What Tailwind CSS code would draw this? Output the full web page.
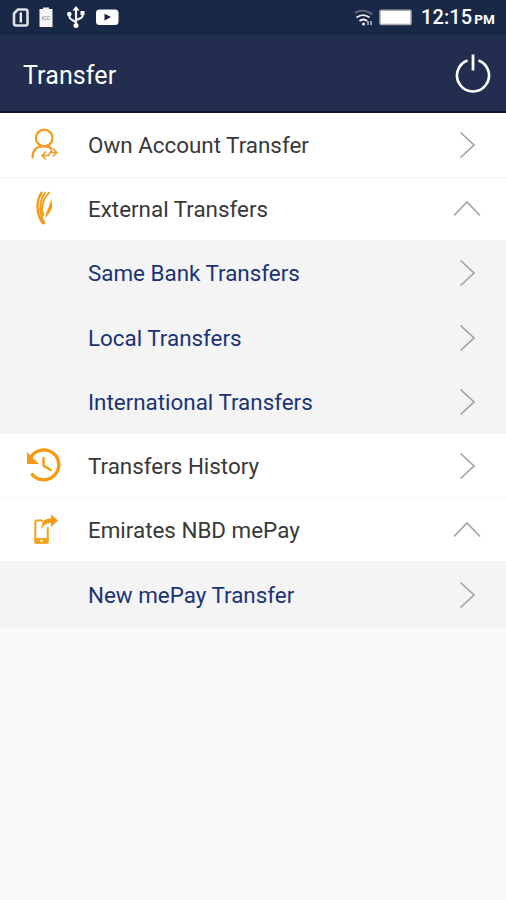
<!DOCTYPE html>
<html lang="en">
<head>
<meta charset="utf-8">
<title>Transfer</title>
<script src="https://cdn.jsdelivr.net/npm/@tailwindcss/browser@4"></script>
</head>
<body class="w-[506px] h-[900px] overflow-hidden bg-[#fafafa] font-['Roboto',sans-serif]">
<svg class="hidden">
  <symbol id="right" viewBox="0 0 28 28"><path d="M7.500 1.500 21 14 7.500 26.500" fill="none" stroke="#a3a3a3" stroke-width="1.700"/></symbol>
  <symbol id="up" viewBox="0 0 28 28"><path d="M1 20.500 14 7 27 20.500" fill="none" stroke="#a3a3a3" stroke-width="1.700"/></symbol>
</svg>
<div class="h-[35px] bg-[#1a2848] flex items-center text-white">
  <svg class="w-[130px] h-[35px]" viewBox="0 0 130 35">
    <path d="M18 9.500h7.500q2 0 2 2v12q0 2-2 2H16q-2 0-2-2V13.500z" fill="none" stroke="#dcdfe5" stroke-width="2.600" stroke-linejoin="round"/>
    <path d="M20.800 12.500v10" stroke="#e9ebef" stroke-width="2.400"/>
    <path d="M39.500 9H43V7.500h6V9h3.500v18h-13z" fill="#f4f5f3"/>
    <text x="46" y="19.500" text-anchor="middle" font-size="5.500" fill="#777">ICC</text>
    <g stroke="#f2f3f5" stroke-width="2.200" fill="none"><path d="M76 9v17M69.500 14v3q0 2 6.500 5M82.500 13v3q0 2-6.500 4"/></g>
    <path d="M76 6l3.500 4.500h-7z" fill="#fff"/><circle cx="76" cy="25.500" r="2.500" fill="#fff"/><circle cx="69.300" cy="14" r="2.300" fill="#fff"/><path d="M80.500 11h4v4h-4z" fill="#fff"/>
    <rect x="96" y="9.500" width="22.500" height="15.500" rx="3.500" fill="#fff"/><path d="M104.500 13.700v6.800l6.500-3.400z" fill="#17213c"/>
  </svg>
  <div class="flex-1"></div>
  <svg class="w-[66px] h-[35px] shrink-0" viewBox="0 0 66 35">
    <g fill="none" stroke-width="1.800"><path d="M-2 14Q7.500 7 17.500 14.500" stroke="#667086"/><path d="M1.500 17.500q6.500-4.800 13 0" stroke="#e8eaee"/><path d="M4.500 21q4-3 7.500 0" stroke="#fff"/></g>
    <circle cx="8.500" cy="24" r="1.500" fill="#fff"/><path d="M13 21v4M16 21v4" stroke="#bbc1cc" stroke-width="1.500"/>
    <rect x="25" y="10.200" width="31" height="14.300" rx="1" fill="#fff" stroke="#aaa" stroke-width="1.500"/>
  </svg>
  <div class="w-[85px] shrink-0 flex items-baseline whitespace-nowrap font-medium"><span class="text-[20px] leading-[37px] tracking-[0.1px]">12:15</span><span class="text-[13.500px] font-bold ml-[2px]">PM</span></div>
</div>
<header class="h-[78px] bg-[#222d50] border-b-2 border-[#10152c] flex items-center justify-between pl-[23px] pr-[14px] text-white">
  <h1 class="text-[25px] tracking-[0.1px] pt-[5px]">Transfer</h1>
  <svg class="w-[38px] h-[42px]" viewBox="0 0 38 42"><path d="M13.500 8.500A16 16 0 1 0 24.500 8.500" fill="none" stroke="#fff" stroke-width="2.600"/><path d="M19 2.500v16" stroke="#fff" stroke-width="2.800"/></svg>
</header>
<main class="text-[22.400px] text-[#383838]">
  <div class="h-[65px] bg-white border-b border-[#f1f1f1] flex items-center pr-[25px]">
    <svg class="w-[88px] h-[64px]" viewBox="0 0 88 64"><g fill="none" stroke="#f59a1d" stroke-width="2.200"><circle cx="44.200" cy="25" r="8.300"/><path d="M32.500 45.500q0-12.300 11.500-12.300 5 0 8 3"/><path d="M42 42.500h7M46 38.500l-4 4 4 4M48 43l4-6M51 39.500h6M53 35.500l4 4-4 4" stroke-width="1.500"/></g></svg>
    <span class="flex-1 pt-0.5">Own Account Transfer</span><svg class="size-7"><use href="#right"/></svg>
  </div>
  <div class="h-[62px] bg-white flex items-center pr-[25px]">
    <svg class="w-[88px] h-[62px]" viewBox="0 0 88 62"><g fill="none" stroke="#f39b17"><path d="M42 14C35.500 23 36 37 43.500 46" stroke-width="2.400"/><path d="M45.500 14C38.500 23 39 34 44.500 46" stroke-width="2"/><path d="M49.500 14C42 22 41 31 43.500 38" stroke-width="1.800"/></g><path d="M51 21C54 30 51 33 45.500 40 46 32 50 29 51 21z" fill="#f39b17"/></svg>
    <span class="flex-1 pt-0.5">External Transfers</span><svg class="size-7"><use href="#up"/></svg>
  </div>
  <div class="h-[66px] bg-[#f4f4f4] border-b border-[#f0f0f0] flex items-center pl-[88px] pr-[25px] text-[#1b3375]">
    <span class="flex-1 pt-[3px]">Same Bank Transfers</span><svg class="size-7"><use href="#right"/></svg>
  </div>
  <div class="h-[64px] bg-[#f4f4f4] border-b border-[#f0f0f0] flex items-center pl-[88px] pr-[25px] text-[#1b3375]">
    <span class="flex-1 pt-[3px]">Local Transfers</span><svg class="size-7"><use href="#right"/></svg>
  </div>
  <div class="h-[64px] bg-[#f4f4f4] flex items-center pl-[88px] pr-[25px] text-[#1b3375]">
    <span class="flex-1 pt-px">International Transfers</span><svg class="size-7"><use href="#right"/></svg>
  </div>
  <div class="h-[64px] bg-white border-b border-[#f6f6f6] flex items-center pr-[25px]">
    <svg class="w-[88px] h-[63px]" viewBox="0 0 88 63"><path d="M31 23A15 15 0 1 1 31.500 39.500" fill="none" stroke="#f49b14" stroke-width="3.400"/><path d="M27 18V30h12z" fill="#f49b14"/><path d="M43.500 23v8.500l8 5" fill="none" stroke="#f49b14" stroke-width="2.400"/></svg>
    <span class="flex-1 pt-[3px]">Transfers History</span><svg class="size-7"><use href="#right"/></svg>
  </div>
  <div class="h-[63px] bg-white flex items-center pr-[25px]">
    <svg class="w-[88px] h-[63px]" viewBox="0 0 88 63"><path d="M43 22.500h-6.500q-1.200 0-1.200 1.200V43.500q0 1.200 1.200 1.200h10q1.200 0 1.200-1.200V29" fill="none" stroke="#f6a21b" stroke-width="2"/><path d="M34.500 40h14v4.500q0 1-1 1h-12q-1 0-1-1z" fill="#f6a21b"/><circle cx="41.500" cy="42.700" r="1.200" fill="#fff"/><path d="M41.500 31.500Q41 20 51 20.500V16.500l7 6L51 29v-4Q44 24.500 41.500 31.500z" fill="#f49b14"/></svg>
    <span class="flex-1 pt-[3px]">Emirates NBD mePay</span><svg class="size-7"><use href="#up"/></svg>
  </div>
  <div class="h-[67px] bg-[#f4f4f4] flex items-center pl-[88px] pr-[25px] text-[#1b3375]">
    <span class="flex-1 pt-0.5">New mePay Transfer</span><svg class="size-7"><use href="#right"/></svg>
  </div>
</main>
</body>
</html>
